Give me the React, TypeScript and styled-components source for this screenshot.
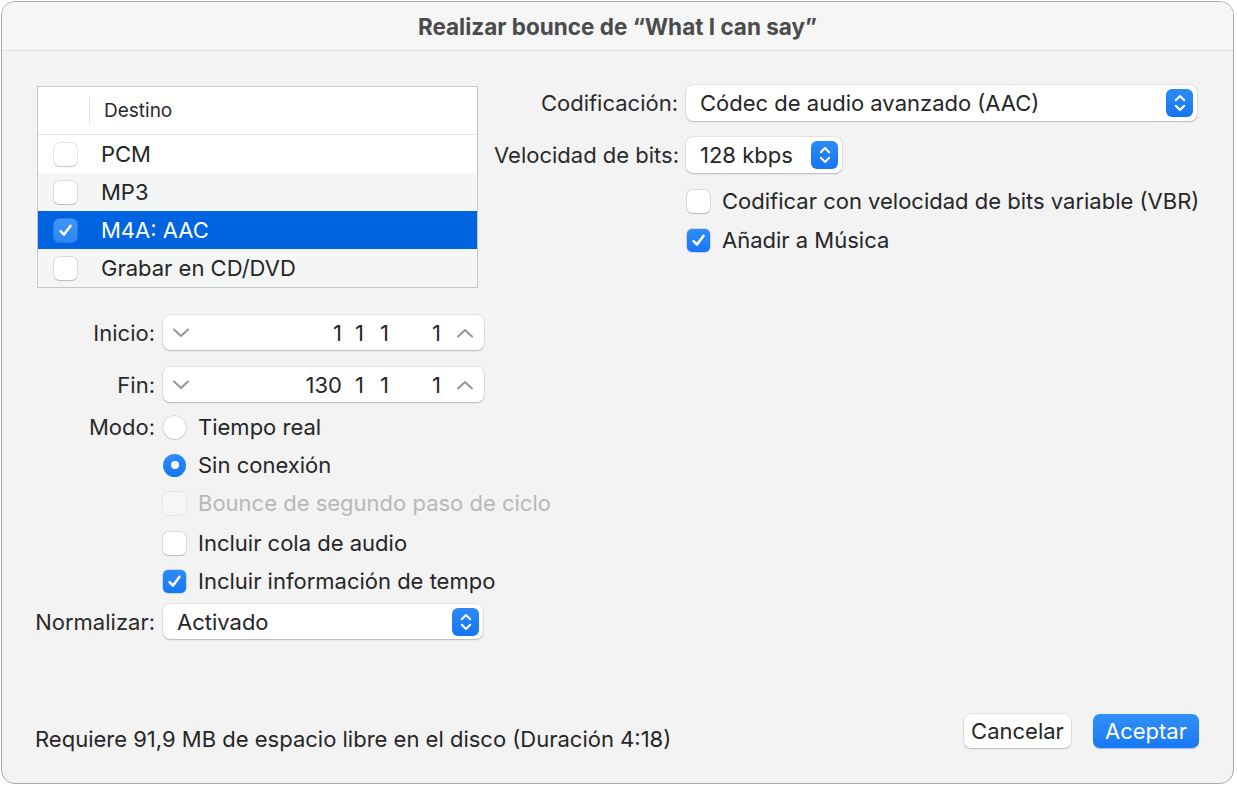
import React from 'react'
import styled, {createGlobalStyle, css} from 'styled-components'

const GlobalStyle = createGlobalStyle`
  html, body {
    margin: 0;
    padding: 0;
    background: #ffffff;
  }
  body {
    font-family: Inter, "Liberation Sans", Arial, sans-serif;
    color: #262626;
    -webkit-font-smoothing: antialiased;
  }
`

const Window = styled.div`
  box-sizing: border-box;
  margin: 1px 0 0 1px;
  width: 1233px;
  height: 783px;
  border: 1px solid #a9a9a9;
  border-radius: 14px;
  overflow: hidden;
  background: #f3f3f3;
  display: flex;
  flex-direction: column;
`

const TitleBar = styled.div`
  height: 48px;
  flex: none;
  display: flex;
  align-items: center;
  justify-content: center;
  background: #f6f6f6;
  border-bottom: 1px solid #dedede;
  font-size: 22.5px;
  font-weight: 700;
  color: #4b4b4b;
`

const Body = styled.div`
  flex: 1;
  display: flex;
  padding: 34px 0 0 33px;
`

const LeftCol = styled.div`
  width: 459px;
  display: flex;
  flex-direction: column;
`

const RightCol = styled.div`
  display: flex;
  flex-direction: column;
`

// ---- tabla de destinos
const Table = styled.div`
  margin: 1px 0 0 2px;
  width: 441px;
  box-sizing: border-box;
  border: 1px solid #c6c6c6;
  background: #ffffff;
`

const HeaderRow = styled.div`
  height: 47px;
  display: flex;
  align-items: center;
  border-bottom: 1px solid #e2e2e2;
  font-size: 19px;
  color: #2a2a2a;
`

const HeaderDivider = styled.div`
  width: 1px;
  height: 27px;
  margin-left: 51px;
  margin-right: 14px;
  background: #e0e0e0;
`

const Row = styled.div<{ $selected?: boolean, $odd?: boolean }>`
  height: 38px;
  display: flex;
  align-items: center;
  padding-left: 16px;
  gap: 24px;
  font-size: 22px;
  background: ${p => p.$selected ? '#0064e1' : p.$odd ? '#f4f5f5' : '#ffffff'};
  color: ${p => p.$selected ? '#ffffff' : '#262626'};
`

// ---- casillas y radios
const Box = styled.span<{ $checked?: boolean, $disabled?: boolean, $onBlue?: boolean }>`
  box-sizing: border-box;
  width: 23px;
  height: 23px;
  flex: none;
  border-radius: 5px;
  display: inline-flex;
  align-items: center;
  justify-content: center;
  ${p => p.$checked ? css`
    background: linear-gradient(#2f8cf7, #1677f3);
    box-shadow: 0 0 0 0.5px rgba(0, 80, 200, 0.35);
  ` : css`
    background: #ffffff;
    box-shadow: 0 0 0 0.5px rgba(0, 0, 0, 0.18), 0 0.5px 1px rgba(0, 0, 0, 0.15);
  `}
  ${p => p.$disabled && css`
    background: #f6f6f6;
    box-shadow: 0 0 0 0.5px rgba(0, 0, 0, 0.1);
  `}
  ${p => p.$onBlue && css`
    background: linear-gradient(#3f95f9, #2d86f6);
    box-shadow: 0 0 0 0.5px rgba(255, 255, 255, 0.3);
  `}
`

const Radio = styled.span<{ $on?: boolean }>`
  box-sizing: border-box;
  width: 23px;
  height: 23px;
  flex: none;
  border-radius: 50%;
  display: inline-flex;
  align-items: center;
  justify-content: center;
  ${p => p.$on ? css`
    background: linear-gradient(#2f8cf7, #1677f3);
  ` : css`
    background: #ffffff;
    box-shadow: 0 0 0 0.5px rgba(0, 0, 0, 0.2), 0 0.5px 1px rgba(0, 0, 0, 0.15);
  `}
`

const Dot = styled.span`
  width: 8px;
  height: 8px;
  border-radius: 50%;
  background: #ffffff;
`

const Check = () => (
  <svg width="15" height="15" viewBox="0 0 15 15">
    <path d="M2.6 8.1 L6 11.6 L12.4 2.9" fill="none" stroke="#fff" strokeWidth="2.6"
          strokeLinecap="round" strokeLinejoin="round"/>
  </svg>
)

const CheckBox = ({checked, disabled, onBlue}: { checked?: boolean, disabled?: boolean, onBlue?: boolean }) => (
  <Box $checked={checked} $disabled={disabled} $onBlue={onBlue}>{checked && <Check/>}</Box>
)

// ---- filas de formulario
const FormRow = styled.div<{ $mt?: number, $h?: number, $label?: number }>`
  display: flex;
  align-items: center;
  margin-top: ${p => p.$mt ?? 0}px;
  height: ${p => p.$h ?? 38}px;
  & > :first-child {
    width: ${p => p.$label ?? 128}px;
  }
`

const Label = styled.span`
  flex: none;
  text-align: right;
  padding-right: 8px;
  box-sizing: border-box;
  font-size: 22px;
  color: #2a2a2a;
  white-space: nowrap;
`

const Option = styled.span<{ $disabled?: boolean }>`
  display: inline-flex;
  align-items: center;
  gap: 12px;
  font-size: 22px;
  white-space: nowrap;
  color: ${p => p.$disabled ? '#b8b8b8' : '#262626'};
`

const Field = styled.div<{ $w: number }>`
  box-sizing: border-box;
  width: ${p => p.$w}px;
  height: 100%;
  background: #ffffff;
  border-radius: 7px;
  box-shadow: 0 0 0 0.5px rgba(0, 0, 0, 0.12), 0 1px 1.5px rgba(0, 0, 0, 0.2);
  display: flex;
  align-items: center;
  font-size: 22px;
`

const Stepper = styled(Field)`
  padding: 0 10px 0 9px;
`

const Digits = styled.div`
  flex: 1;
  display: flex;
  justify-content: flex-end;
  padding-right: 15px;
`

const Seg = styled.span<{ $w?: number }>`
  text-align: right;
  width: ${p => p.$w ? `${p.$w}px` : 'auto'};
`

const Popup = styled(Field)`
  padding: 0 4px 0 14px;
  justify-content: space-between;
`

const ArrowBox = styled.span`
  width: 27px;
  height: 28px;
  border-radius: 6px;
  background: linear-gradient(#2d8bf7, #1675f2);
  display: inline-flex;
  align-items: center;
  justify-content: center;
`

const Chevron = ({up}: { up?: boolean }) => (
  <svg width="18" height="12" viewBox="0 0 18 12">
    <path d={up ? 'M2 9.5 L9 3 L16 9.5' : 'M2 2.5 L9 9 L16 2.5'} fill="none" stroke="#969696"
          strokeWidth="2" strokeLinecap="round" strokeLinejoin="round"/>
  </svg>
)

const UpDown = () => (
  <svg width="14" height="20" viewBox="0 0 14 20">
    <path d="M2.8 7.2 L7 3 L11.2 7.2 M2.8 12.8 L7 17 L11.2 12.8" fill="none" stroke="#fff"
          strokeWidth="2" strokeLinecap="round" strokeLinejoin="round"/>
  </svg>
)

// ---- pie
const Footer = styled.div`
  display: flex;
  align-items: flex-end;
  justify-content: space-between;
  padding: 0 34px 32px 33px;
`

const Info = styled.span`
  font-size: 22px;
  line-height: 24px;
  color: #262626;
`

const Buttons = styled.div`
  display: flex;
  gap: 22px;
  margin-bottom: 3px;
`

const Button = styled.button<{ $primary?: boolean }>`
  box-sizing: border-box;
  height: 34px;
  width: ${p => p.$primary ? 106 : 107}px;
  padding: 0;
  border: none;
  border-radius: 7px;
  font-family: inherit;
  font-size: 22px;
  ${p => p.$primary ? css`
    background: linear-gradient(#3291f8, #1878f3);
    color: #ffffff;
    box-shadow: 0 0.5px 1px rgba(0, 60, 160, 0.3);
  ` : css`
    background: #ffffff;
    color: #262626;
    box-shadow: 0 0 0 0.5px rgba(0, 0, 0, 0.12), 0 1px 1.5px rgba(0, 0, 0, 0.2);
  `}
`

const destinos = [
  {name: 'PCM', checked: false},
  {name: 'MP3', checked: false},
  {name: 'M4A: AAC', checked: true},
  {name: 'Grabar en CD/DVD', checked: false},
]

export default function App() {
  return (
    <>
      <GlobalStyle/>
      <Window>
        <TitleBar>Realizar bounce de “What I can say”</TitleBar>
        <Body>
          <LeftCol>
            <Table>
              <HeaderRow>
                <HeaderDivider/>
                Destino
              </HeaderRow>
              {destinos.map((d, i) => (
                <Row key={d.name} $odd={i % 2 === 1} $selected={d.checked}>
                  <CheckBox checked={d.checked} onBlue={d.checked}/>
                  {d.name}
                </Row>
              ))}
            </Table>

            <FormRow $mt={27} $h={35}>
              <Label>Inicio:</Label>
              <Stepper $w={321}>
                <Chevron/>
                <Digits>
                  <Seg>1</Seg><Seg $w={22}>1</Seg><Seg $w={25}>1</Seg><Seg $w={52}>1</Seg>
                </Digits>
                <Chevron up/>
              </Stepper>
            </FormRow>
            <FormRow $mt={17} $h={35}>
              <Label>Fin:</Label>
              <Stepper $w={321}>
                <Chevron/>
                <Digits>
                  <Seg>130</Seg><Seg $w={22}>1</Seg><Seg $w={25}>1</Seg><Seg $w={52}>1</Seg>
                </Digits>
                <Chevron up/>
              </Stepper>
            </FormRow>
            <FormRow $mt={6}>
              <Label>Modo:</Label>
              <Option><Radio/>Tiempo real</Option>
            </FormRow>
            <FormRow>
              <Label/>
              <Option><Radio $on><Dot/></Radio>Sin conexión</Option>
            </FormRow>
            <FormRow>
              <Label/>
              <Option $disabled><CheckBox disabled/>Bounce de segundo paso de ciclo</Option>
            </FormRow>
            <FormRow $mt={2}>
              <Label/>
              <Option><CheckBox/>Incluir cola de audio</Option>
            </FormRow>
            <FormRow>
              <Label/>
              <Option><CheckBox checked/>Incluir información de tempo</Option>
            </FormRow>
            <FormRow $mt={4} $h={35}>
              <Label>Normalizar:</Label>
              <Popup $w={320}>
                Activado
                <ArrowBox><UpDown/></ArrowBox>
              </Popup>
            </FormRow>
          </LeftCol>

          <RightCol>
            <FormRow $h={36} $label={192}>
              <Label>Codificación:</Label>
              <Popup $w={511}>
                Códec de audio avanzado (AAC)
                <ArrowBox><UpDown/></ArrowBox>
              </Popup>
            </FormRow>
            <FormRow $mt={16} $h={36} $label={192}>
              <Label>Velocidad de bits:</Label>
              <Popup $w={156}>
                128 kbps
                <ArrowBox><UpDown/></ArrowBox>
              </Popup>
            </FormRow>
            <FormRow $mt={9} $label={193}>
              <span/>
              <Option><CheckBox/>Codificar con velocidad de bits variable (VBR)</Option>
            </FormRow>
            <FormRow $mt={1} $label={193}>
              <span/>
              <Option><CheckBox checked/>Añadir a Música</Option>
            </FormRow>
          </RightCol>
        </Body>

        <Footer>
          <Info>Requiere 91,9 MB de espacio libre en el disco (Duración 4:18)</Info>
          <Buttons>
            <Button>Cancelar</Button>
            <Button $primary>Aceptar</Button>
          </Buttons>
        </Footer>
      </Window>
    </>
  )
}
